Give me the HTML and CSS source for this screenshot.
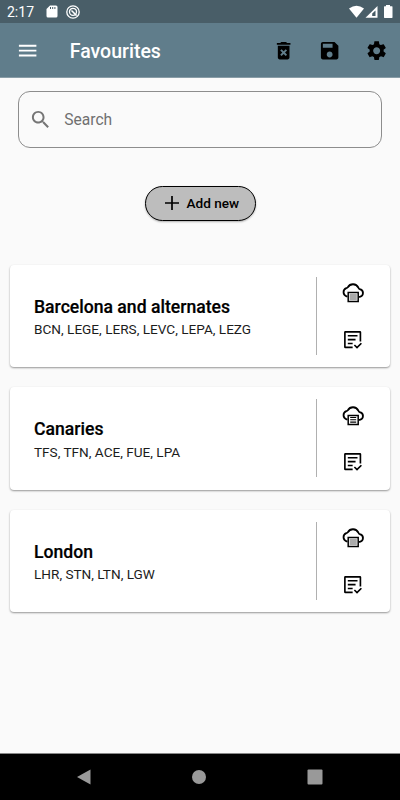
FILE: index.html
```html
<!DOCTYPE html>
<html lang="en">
<head>
<meta charset="utf-8">
<title>Favourites</title>
<link rel="stylesheet" href="styles.css">
</head>
<body>
<svg class="defs" aria-hidden="true">
  <symbol id="cloud" viewBox="0 0 24 24">
    <path d="M6.500 15.300H5.500A4.300 4.300 0 0 1 5.300 7.200Q6.200 7 6.800 6.200A6 6 0 0 1 17.300 6.500Q17.800 8 18.600 8.100A3.900 3.900 0 0 1 18.800 15.800H17.800" fill="none" stroke="#000" stroke-width="1.800"/>
    <path d="M7.200 11.400H17.200V20.400H7.200Z" fill="#fff" stroke="#000" stroke-width="1.500"/>
  </symbol>
  <symbol id="list" viewBox="0 0 24 24">
    <path d="M20 14V4.500Q20 4 19.500 4H4.500Q4 4 4 4.500V19.500Q4 20 4.500 20H12M7 8H17M7 12H15M7 16H12M13.800 17.500L16.500 20.200L21 15.700" fill="none" stroke="#000" stroke-width="1.700"/>
  </symbol>
</svg>
<div class="status">
  <span class="time">2:17</span>
  <svg class="sd" viewBox="0 0 12 13"><path d="M4 0.500H10Q11.500 0.500 11.500 2V11Q11.500 12.500 10 12.500H2Q0.500 12.500 0.500 11V4Z" fill="#fff"/><path d="M4.500 2V4M6.700 2V4M8.900 2V4" stroke="#455a64" stroke-width="1"/></svg>
  <svg class="dnd" viewBox="0 0 14 14"><circle cx="7" cy="7" r="6.200" fill="none" stroke="#fff" stroke-width="1.300"/><circle cx="7" cy="6.800" r="3.500" fill="none" stroke="#fff" stroke-width="1.300"/><path d="M5.500 5.500L10.600 10.600" stroke="#fff" stroke-width="1.500"/></svg>
  <span class="spacer"></span>
  <svg class="signals" viewBox="0 0 44 14"><path d="M0 3.500Q7.500-2 15 3.500L7.500 12.700Z" fill="#fff"/><path d="M28.500 1V12.700H16.500Z" fill="#fff"/><path d="M26.500 5.500V11H23.200V8.500Z" fill="#455a64"/><path d="M37 0H41V1.300H43Q43.500 1.300 43.500 2V12.300Q43.500 13 43 13H35.500Q35 13 35 12.300V2Q35 1.300 35.500 1.300H37Z" fill="#fff"/></svg>
</div>
<header class="appbar">
  <svg class="icon" viewBox="0 0 24 24"><path d="M3 18h18v-2H3v2zm0-5h18v-2H3v2zm0-7v2h18V6H3z" fill="#fff"/></svg>
  <h1>Favourites</h1>
  <svg class="icon" viewBox="0 0 24 24"><path d="M6 19c0 1.100.9 2 2 2h8c1.100 0 2-.9 2-2V7H6v12zm2.460-7.120l1.410-1.410L12 12.590l2.120-2.120 1.410 1.410L13.410 14l2.120 2.120-1.410 1.410L12 15.410l-2.120 2.120-1.410-1.410L10.590 14l-2.130-2.120zM15.500 4l-1-1h-5l-1 1H5v2h14V4z"/></svg>
  <svg class="icon" viewBox="0 0 24 24"><path d="M17 3H5c-1.110 0-2 .9-2 2v14c0 1.100.89 2 2 2h14c1.100 0 2-.9 2-2V7l-4-4zm-5 16c-1.660 0-3-1.340-3-3s1.340-3 3-3 3 1.340 3 3-1.340 3-3 3zm3-10H5V5h10v4z"/></svg>
  <svg class="icon" viewBox="0 0 24 24"><path d="M19.140 12.940c.04-.3.06-.61.06-.94 0-.32-.02-.64-.07-.94l2.030-1.580c.18-.14.23-.41.12-.61l-1.920-3.320c-.12-.22-.37-.29-.59-.22l-2.390.96c-.5-.38-1.030-.7-1.620-.94l-.36-2.540c-.04-.24-.24-.41-.48-.41h-3.840c-.24 0-.43.17-.47.41l-.36 2.540c-.59.24-1.130.57-1.620.94l-2.390-.96c-.22-.08-.47 0-.59.22L2.740 8.870c-.12.21-.08.47.12.61l2.030 1.580c-.05.3-.09.63-.09.94s.02.64.07.94l-2.030 1.580c-.18.14-.23.41-.12.61l1.920 3.320c.12.22.37.29.59.22l2.390-.96c.5.38 1.030.7 1.620.94l.36 2.540c.05.24.24.41.48.41h3.840c.24 0 .44-.17.47-.41l.36-2.540c.59-.24 1.130-.56 1.620-.94l2.390.96c.22.08.47 0 .59-.22l1.920-3.320c.12-.22.07-.47-.12-.61l-2.010-1.580zM12 15.600c-1.980 0-3.600-1.620-3.600-3.600s1.620-3.600 3.600-3.600 3.600 1.620 3.600 3.600-1.620 3.600-3.600 3.600z"/></svg>
</header>
<main>
  <div class="search">
    <svg class="icon" viewBox="0 0 24 24"><path d="M15.500 14h-.79l-.28-.27C15.410 12.590 16 11.110 16 9.500 16 5.910 13.090 3 9.500 3S3 5.910 3 9.500 5.910 16 9.500 16c1.610 0 3.090-.59 4.230-1.570l.27.28v.79l5 4.990L20.490 19l-4.990-5zm-6 0C7.010 14 5 11.990 5 9.500S7.010 5 9.500 5 14 7.010 14 9.500 11.990 14 9.500 14z" fill="#757575"/></svg>
    <span>Search</span>
  </div>
  <button class="add"><svg viewBox="0 0 14 14"><path d="M7 0V14M0 7H14" stroke="#000" stroke-width="1.700"/></svg><span>Add new</span></button>
  <section class="cards">
    <article class="card">
      <div class="text"><h2>Barcelona and alternates</h2><p>BCN, LEGE, LERS, LEVC, LEPA, LEZG</p></div>
      <div class="actions">
        <svg class="cloud" viewBox="0 0 24 24"><use href="#cloud"/><path class="shade" d="M8.600 12.800H15.800V19H8.600Z"/></svg>
        <svg class="list"><use href="#list"/></svg>
      </div>
    </article>
    <article class="card">
      <div class="text"><h2>Canaries</h2><p>TFS, TFN, ACE, FUE, LPA</p></div>
      <div class="actions">
        <svg class="cloud" viewBox="0 0 24 24"><use href="#cloud"/><path class="rows" d="M9.200 13.500H15.200M9.200 15.800H15.200M9.200 18.100H15.200"/></svg>
        <svg class="list"><use href="#list"/></svg>
      </div>
    </article>
    <article class="card">
      <div class="text"><h2>London</h2><p>LHR, STN, LTN, LGW</p></div>
      <div class="actions">
        <svg class="cloud" viewBox="0 0 24 24"><use href="#cloud"/><path class="shade" d="M8.600 12.800H15.800V19H8.600Z"/></svg>
        <svg class="list"><use href="#list"/></svg>
      </div>
    </article>
  </section>
</main>
<nav class="navbar">
  <svg viewBox="0 0 16 16"><path d="M1 8L14.500 .5V15.500Z"/></svg>
  <svg viewBox="0 0 16 16"><circle cx="8" cy="8" r="7"/></svg>
  <svg viewBox="0 0 16 16"><rect x=".5" y=".5" width="15" height="15" rx="1"/></svg>
</nav>
</body>
</html>
```
FILE: styles.css
```css
* { box-sizing: border-box; }
body {
  margin: 0;
  height: 800px;
  display: flex;
  flex-direction: column;
  overflow: hidden;
  background: #fafafa;
  color: #000;
  font-family: Roboto, "Liberation Sans", sans-serif;
}
h1, h2, p { margin: 0; }
svg { display: block; flex: none; }
.defs { display: none; }
.spacer { flex: 1; }

.status {
  height: 23px;
  flex: none;
  display: flex;
  align-items: center;
  padding: 0 7px;
  background: #495e68;
  color: #fff;
}
.time { width: 39px; font-size: 14px; line-height: 23px; padding-top: 1px; }
.sd { width: 12px; height: 13px; }
.dnd { width: 14px; height: 14px; margin-left: 8px; }
.signals { width: 44px; height: 14px; }

.appbar {
  height: 55px;
  flex: none;
  display: flex;
  align-items: center;
  padding: 1px 12px 0 15.500px;
  background: #607d8b;
  border-bottom: 1px solid #899da7;
}
.icon { width: 23.300px; height: 23.300px; }
.appbar .icon + .icon { margin-left: 23.200px; }
.appbar h1 {
  flex: 1;
  margin-left: 31px;
  padding-top: 2px;
  font-size: 19.500px;
  font-weight: 500;
  line-height: 24px;
  color: #fff;
}

main { flex: 1; padding: 13px 10px 0; }
.search {
  height: 57px;
  margin: 0 8px;
  display: flex;
  align-items: center;
  padding-left: 10px;
  border: 1px solid #8d8d8d;
  border-radius: 12px;
  font-size: 15.600px;
  color: #707070;
}
.search span { margin-left: 12px; }

.add {
  width: 111px;
  height: 35px;
  margin: 37.500px auto 0;
  padding: 0 0 0 19px;
  display: flex;
  align-items: center;
  gap: 8px;
  border: 1px solid #000;
  border-radius: 18px;
  background: #bdbdbd;
  box-shadow: 0 1px 2px rgba(0, 0, 0, .3);
  color: #000;
  font: 500 13.600px Roboto, "Liberation Sans", sans-serif;
  white-space: nowrap;
}
.add svg { width: 14px; height: 14px; }

.cards { display: grid; gap: 20px; margin-top: 44px; }
.card {
  height: 102.500px;
  display: flex;
  align-items: center;
  padding-left: 24px;
  background: #fff;
  border-radius: 4px;
  box-shadow: 0 1px 2px rgba(0, 0, 0, .4);
}
.text { flex: 1; padding-top: 4px; }
.text h2 { font-size: 17.600px; font-weight: 500; line-height: 23px; -webkit-text-stroke: .2px #000; }
.text p { margin-top: -.5px; font-size: 13.600px; line-height: 22px; color: #1c1c1c; }
.actions {
  width: 74px;
  height: 78px;
  border-left: 1px solid #b0b0b0;
  display: flex;
  flex-direction: column;
  align-items: center;
  gap: 22.500px;
  padding-right: 1.500px;
}
.cloud { width: 24px; height: 24px; margin-top: 4.500px; }
.list { width: 23.300px; height: 23.300px; }
.shade { fill: #aaa; }
.rows { fill: none; stroke: #000; stroke-width: 1.100; }

.navbar {
  height: 47px;
  flex: none;
  display: flex;
  justify-content: space-between;
  align-items: center;
  padding: 0 77px 0 75.500px;
  background: #000;
  border-top: 1px solid #888;
  fill: #999;
}
.navbar svg { width: 16px; height: 16px; }
```
